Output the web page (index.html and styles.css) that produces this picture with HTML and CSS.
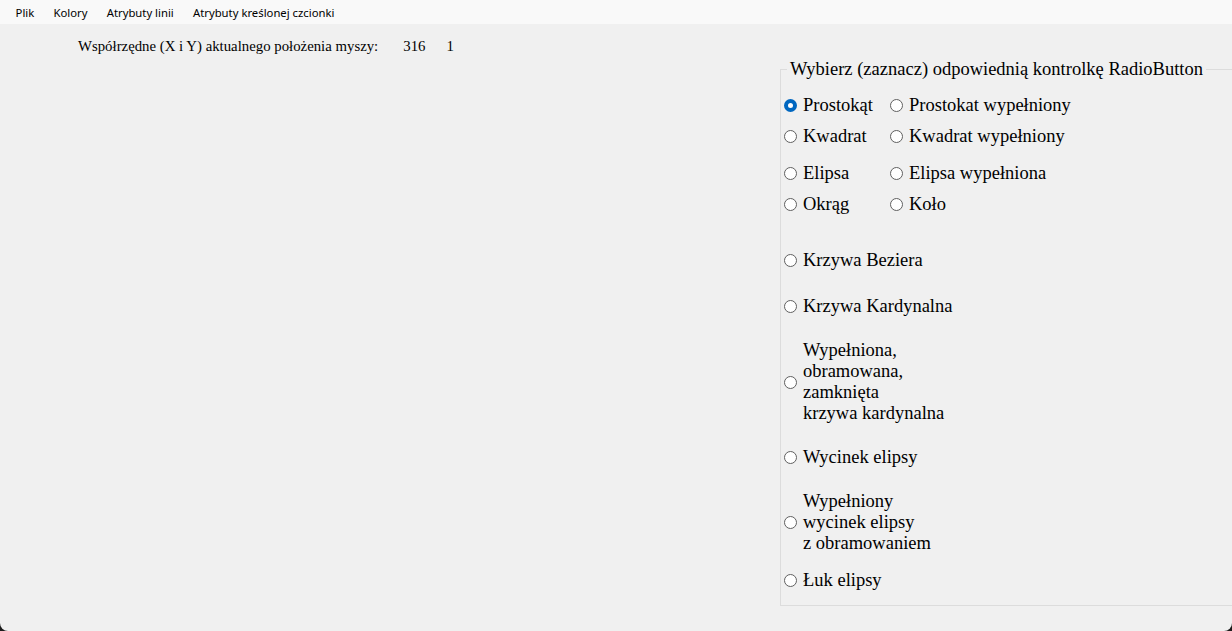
FILE: index.html
```html
<!DOCTYPE html>
<html lang="pl">
<head>
    <meta charset="UTF-8">
    <title>Rysowanie</title>
    <link rel="stylesheet" href="styles.css">
</head>
<body>
    <div class="window">
        <nav class="menu">
            <span class="menu-item">Plik</span>
            <span class="menu-item">Kolory</span>
            <span class="menu-item">Atrybuty linii</span>
            <span class="menu-item">Atrybuty kreślonej czcionki</span>
        </nav>

        <div class="main">
            <div class="coords">
                <span class="coords-label">Współrzędne (X i Y) aktualnego położenia myszy:</span>
                <span class="coord-x">316</span>
                <span class="coord-y">1</span>
            </div>

            <fieldset class="group">
                <legend>Wybierz (zaznacz) odpowiednią kontrolkę RadioButton</legend>

                <div class="grid">
                    <label class="opt r1"><span class="radio checked"></span>Prostokąt</label>
                    <label class="opt r1"><span class="radio"></span>Prostokat wypełniony</label>
                    <label class="opt r2"><span class="radio"></span>Kwadrat</label>
                    <label class="opt r2"><span class="radio"></span>Kwadrat wypełniony</label>
                    <label class="opt r3"><span class="radio"></span>Elipsa</label>
                    <label class="opt r3"><span class="radio"></span>Elipsa wypełniona</label>
                    <label class="opt r4"><span class="radio"></span>Okrąg</label>
                    <label class="opt r4"><span class="radio"></span>Koło</label>
                </div>

                <label class="opt r5"><span class="radio"></span>Krzywa Beziera</label>
                <label class="opt r6"><span class="radio"></span>Krzywa Kardynalna</label>
                <label class="opt r7"><span class="radio"></span><span>Wypełniona,<br>obramowana,<br>zamknięta<br>krzywa kardynalna</span></label>
                <label class="opt r8"><span class="radio"></span>Wycinek elipsy</label>
                <label class="opt r9"><span class="radio"></span><span>Wypełniony<br>wycinek elipsy<br>z obramowaniem</span></label>
                <label class="opt r10"><span class="radio"></span>Łuk elipsy</label>
            </fieldset>
        </div>
    </div>
</body>
</html>
```

FILE: styles.css
```css
html, body {
    margin: 0;
    padding: 0;
    background-color: #1c1c1c;
    overflow: hidden;
}

.window {
    width: 1232px;
    height: 631px;
    background-color: #f0f0f0;
    border-bottom-left-radius: 8px;
    border-bottom-right-radius: 8px;
    overflow: hidden;
}

/* pasek menu */
.menu {
    height: 24px;
    background-color: #f9f9f9;
    display: flex;
    align-items: center;
    padding-left: 6px;
    font-family: "Noto Sans", sans-serif;
    font-size: 11.3px;
    color: #000;
}

.menu-item {
    padding: 0 9.6px;
}

.main {
    display: flex;
    align-items: flex-start;
    font-family: "Liberation Serif", "Times New Roman", serif;
    color: #000;
}

.coords {
    margin-left: 78px;
    padding-top: 38px;
    margin-top: -24px;
    font-size: 14.8px;
    line-height: 16px;
    display: flex;
}

.coord-x {
    margin-left: 25px;
}

.coord-y {
    margin-left: 21px;
}

/* grupa z przyciskami radiowymi */
.group {
    margin: 35px -30px 0 auto;
    width: 482px;
    border: 1px solid #dcdcdc;
    padding: 15px 0 14px 3px;
    box-sizing: border-box;
    font-family: "Liberation Serif", "Times New Roman", serif;
    font-size: 18.5px;
}

.group legend {
    margin-left: 3px;
    padding: 0 3px;
    line-height: 20px;
}

.grid {
    display: grid;
    grid-template-columns: 106px auto;
}

.opt {
    display: flex;
    align-items: center;
    height: 22px;
    line-height: 21px;
    white-space: nowrap;
    font-family: "Liberation Serif", "Times New Roman", serif;
}

.radio {
    width: 11px;
    height: 11px;
    border: 1px solid #606060;
    border-radius: 50%;
    background-color: #fff;
    margin-right: 6px;
    flex-shrink: 0;
}

.radio.checked {
    width: 5px;
    height: 5px;
    border: 4px solid #0067c0;
}

.r2 { margin-top: 9px; }
.r3 { margin-top: 15px; }
.r4 { margin-top: 9px; }
.r5 { margin-top: 34px; }
.r6 { margin-top: 24px; }
.r7 { margin-top: 23px; height: 84px; }
.r8 { margin-top: 22px; }
.r9 { margin-top: 22px; height: 64px; }
.r10 { margin-top: 15px; }
```
